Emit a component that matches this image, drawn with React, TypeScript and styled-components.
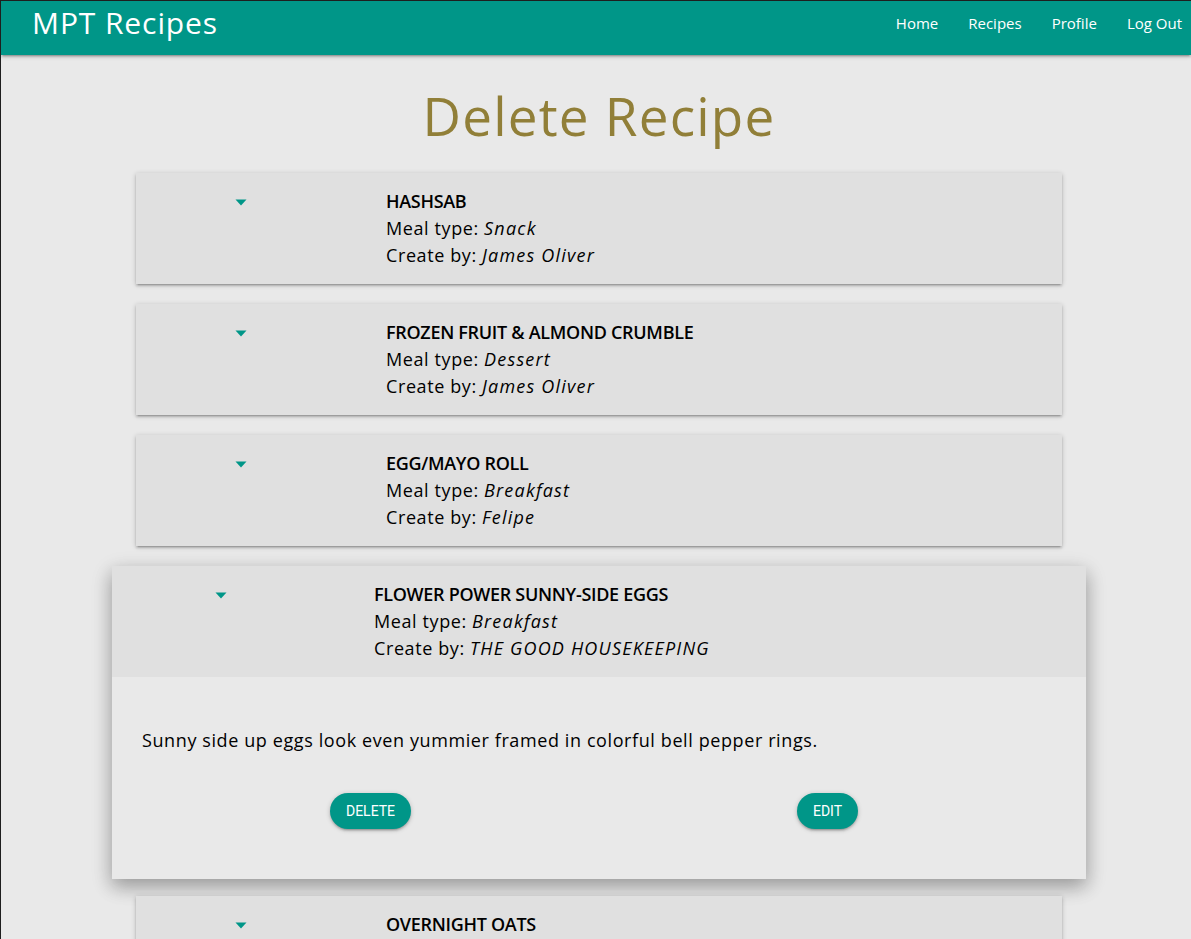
import React from "react";
import styled, { createGlobalStyle } from "styled-components";

const GlobalStyle = createGlobalStyle`
  html, body {
    margin: 0;
    padding: 0;
    background: #e9e9e9;
  }
  body {
    font-family: "Open Sans", "Liberation Sans", sans-serif;
    color: #000;
    border-left: 1px solid #1e1e1e;
    border-top: 1px solid #1e1e1e;
    min-height: 100vh;
    box-sizing: border-box;
  }
`;

type Recipe = {
  name: string;
  mealType: string;
  author: string;
  description?: string;
};

const recipes: Recipe[] = [
  { name: "HASHSAB", mealType: "Snack", author: "James Oliver" },
  { name: "FROZEN FRUIT & ALMOND CRUMBLE", mealType: "Dessert", author: "James Oliver" },
  { name: "EGG/MAYO ROLL", mealType: "Breakfast", author: "Felipe" },
  {
    name: "FLOWER POWER SUNNY-SIDE EGGS",
    mealType: "Breakfast",
    author: "THE GOOD HOUSEKEEPING",
    description:
      "Sunny side up eggs look even yummier framed in colorful bell pepper rings.",
  },
  { name: "OVERNIGHT OATS", mealType: "Breakfast", author: "James Oliver" },
];

const OPEN_INDEX = 3;

const App = () => {
  return (
    <>
      <GlobalStyle />
      <NavBar>
        <Brand href="#">MPT Recipes</Brand>
        <NavLinks>
          <li><a href="#">Home</a></li>
          <li><a href="#">Recipes</a></li>
          <li><a href="#">Profile</a></li>
          <li><a href="#">Log Out</a></li>
        </NavLinks>
      </NavBar>
      <Main>
        <Title>Delete Recipe</Title>
        <Collapsible>
          {recipes.map((recipe, i) => {
            const open = i === OPEN_INDEX;
            return (
              <Item key={recipe.name} $open={open}>
                <Header>
                  <ArrowCell>
                    <svg width="12" height="7" viewBox="0 0 12 7">
                      <path d="M0.5 0.5 L11.5 0.5 L6 6.5 Z" fill="#009688" />
                    </svg>
                  </ArrowCell>
                  <Info>
                    <RecipeName>{recipe.name}</RecipeName>
                    <div>
                      Meal type: <em>{recipe.mealType}</em>
                    </div>
                    <div>
                      Create by: <em>{recipe.author}</em>
                    </div>
                  </Info>
                </Header>
                {open && (
                  <Body>
                    <Description>{recipe.description}</Description>
                    <ButtonRow>
                      <ButtonCell>
                        <RoundButton>Delete</RoundButton>
                      </ButtonCell>
                      <ButtonCell>
                        <RoundButton>Edit</RoundButton>
                      </ButtonCell>
                    </ButtonRow>
                  </Body>
                )}
              </Item>
            );
          })}
        </Collapsible>
      </Main>
    </>
  );
};

export default App;

const NavBar = styled.nav`
  height: 54px;
  background: #009688;
  display: flex;
  justify-content: space-between;
  align-items: flex-start;
  box-shadow: 0 2px 2px 0 rgba(0, 0, 0, 0.14), 0 3px 1px -2px rgba(0, 0, 0, 0.12),
    0 1px 5px 0 rgba(0, 0, 0, 0.2);
  position: relative;
  z-index: 2;
`;

const Brand = styled.a`
  color: #fff;
  text-decoration: none;
  font-size: 30px;
  letter-spacing: 0.9px;
  line-height: 44px;
  margin-left: 31px;
`;

const NavLinks = styled.ul`
  list-style: none;
  margin: 0;
  padding: 0 9px 0 0;
  display: flex;
  gap: 30px;

  a {
    color: #fff;
    text-decoration: none;
    font-size: 15px;
    line-height: 45px;
  }
`;

const Main = styled.main`
  padding: 0 0 40px 6px;
`;

const Title = styled.h2`
  margin: 32px 0 28px;
  text-align: center;
  font-size: 53px;
  line-height: 58px;
  font-weight: 400;
  letter-spacing: 1.2px;
  color: #917f38;
`;

const Collapsible = styled.ul`
  list-style: none;
  padding: 0;
  margin: 0 auto;
  width: 974px;
`;

const Item = styled.li<{ $open: boolean }>`
  margin: ${(p) => (p.$open ? "0 0 17px" : "0 24px 20px")};
  background: #e9e9e9;
  box-shadow: ${(p) =>
    p.$open
      ? "0 8px 17px 0 rgba(0,0,0,0.2), 0 6px 20px 0 rgba(0,0,0,0.19)"
      : "0 2px 2px 0 rgba(0,0,0,0.14), 0 3px 1px -2px rgba(0,0,0,0.12), 0 1px 5px 0 rgba(0,0,0,0.2)"};
`;

const Header = styled.div`
  display: flex;
  padding: 15px;
  background: #e0e0e0;
  font-size: 18px;
  line-height: 27px;
  letter-spacing: 0.6px;
`;

const ArrowCell = styled.div`
  width: 20%;
  display: flex;
  justify-content: center;
  align-items: flex-start;
  padding-top: 11px;

  svg {
    display: block;
  }
`;

const Info = styled.div`
  margin-left: calc(5% + 11px);

  em {
    font-style: italic;
    letter-spacing: 1.2px;
  }
`;

const RecipeName = styled.div`
  font-weight: 600;
  letter-spacing: -0.3px;
`;

const Body = styled.div`
  padding: 30px;
  font-size: 18px;
  line-height: 27px;
  letter-spacing: 0.6px;
`;

const Description = styled.p`
  margin: 20px 0 0;
`;

const ButtonRow = styled.div`
  display: grid;
  grid-template-columns: 1fr 1fr;
  margin: 39px 0 20px;
`;

const ButtonCell = styled.div`
  display: flex;
  justify-content: center;
`;

const RoundButton = styled.button`
  height: 36px;
  padding: 0 16px;
  border: none;
  border-radius: 18px;
  background: #009688;
  color: #fff;
  font-family: Roboto, "Liberation Sans", sans-serif;
  font-size: 14px;
  font-weight: 400;
  letter-spacing: 0;
  text-transform: uppercase;
  cursor: pointer;
  box-shadow: 0 2px 2px 0 rgba(0, 0, 0, 0.14), 0 3px 1px -2px rgba(0, 0, 0, 0.12),
    0 1px 5px 0 rgba(0, 0, 0, 0.2);
`;
